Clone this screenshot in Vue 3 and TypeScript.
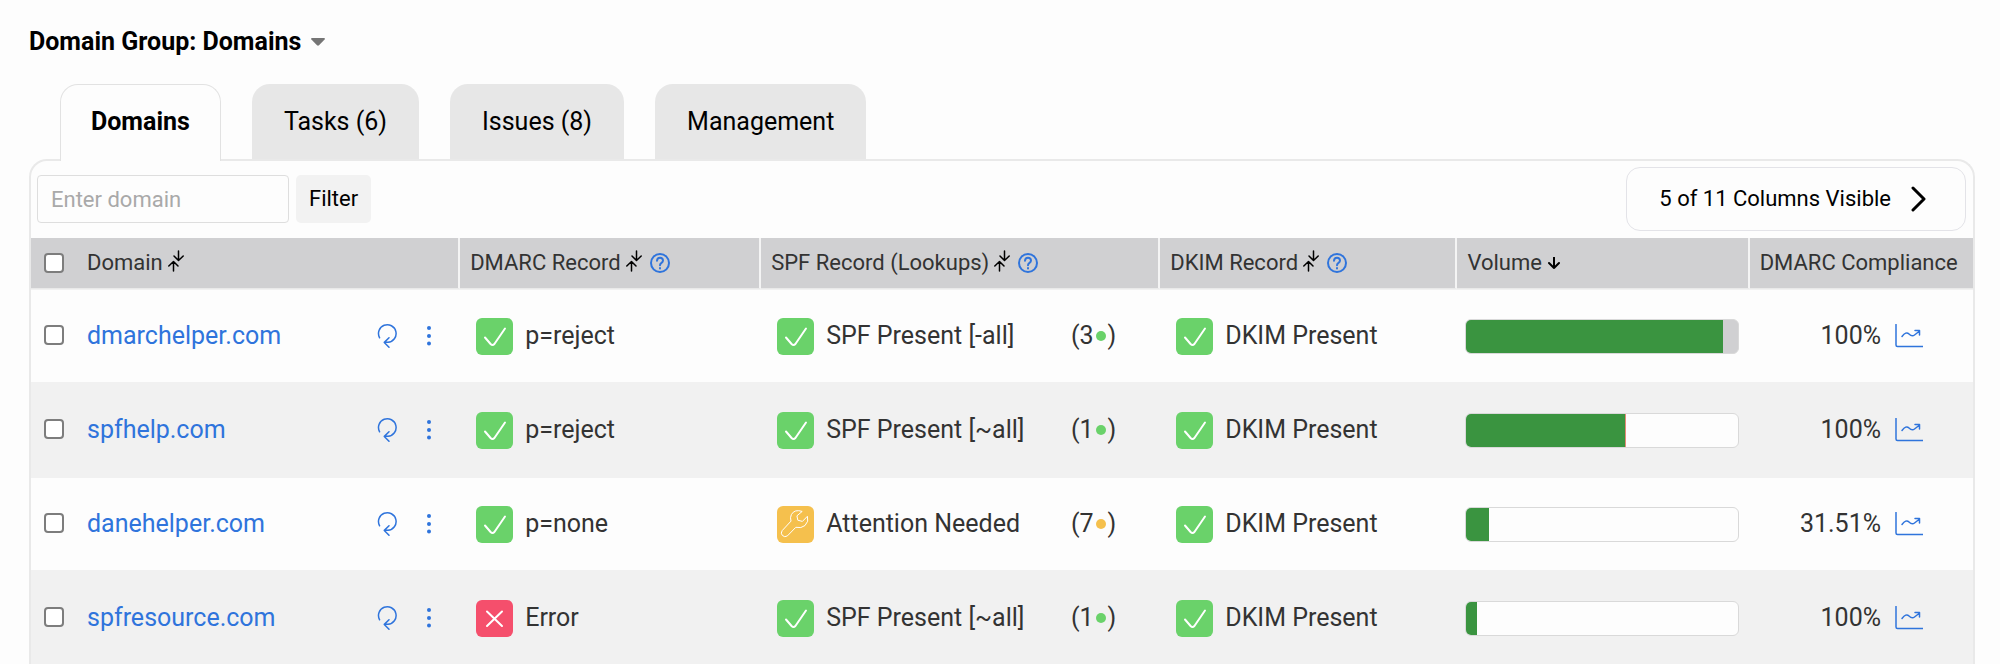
<script setup lang="ts">
import { ref } from 'vue'

type Status = 'ok' | 'warn' | 'error'

interface DomainRow {
  name: string
  dmarc: { status: Status; text: string }
  spf: { status: Status; text: string; lookups: number }
  dkim: { status: Status; text: string }
  volume: number
  rest: 'filled' | 'edge' | 'none'
  compliance: string
}

const tabs = ['Domains', 'Tasks (6)', 'Issues (8)', 'Management']
const activeTab = ref('Domains')
const filter = ref('')

const columns = [
  { label: 'DMARC Record', sort: 'both', help: true },
  { label: 'SPF Record (Lookups)', sort: 'both', help: true },
  { label: 'DKIM Record', sort: 'both', help: true },
  { label: 'Volume', sort: 'down', help: false },
  { label: 'DMARC Compliance', sort: '', help: false },
]

const rows: DomainRow[] = [
  {
    name: 'dmarchelper.com',
    dmarc: { status: 'ok', text: 'p=reject' },
    spf: { status: 'ok', text: 'SPF Present [-all]', lookups: 3 },
    dkim: { status: 'ok', text: 'DKIM Present' },
    volume: 94.5,
    rest: 'filled',
    compliance: '100%',
  },
  {
    name: 'spfhelp.com',
    dmarc: { status: 'ok', text: 'p=reject' },
    spf: { status: 'ok', text: 'SPF Present [~all]', lookups: 1 },
    dkim: { status: 'ok', text: 'DKIM Present' },
    volume: 58.5,
    rest: 'edge',
    compliance: '100%',
  },
  {
    name: 'danehelper.com',
    dmarc: { status: 'ok', text: 'p=none' },
    spf: { status: 'warn', text: 'Attention Needed', lookups: 7 },
    dkim: { status: 'ok', text: 'DKIM Present' },
    volume: 8.5,
    rest: 'none',
    compliance: '31.51%',
  },
  {
    name: 'spfresource.com',
    dmarc: { status: 'error', text: 'Error' },
    spf: { status: 'ok', text: 'SPF Present [~all]', lookups: 1 },
    dkim: { status: 'ok', text: 'DKIM Present' },
    volume: 4,
    rest: 'none',
    compliance: '100%',
  },
]

const glyphs: Record<Status, string> = {
  ok: 'M9 19.5l5.600 6.500q1.900 1.900 3.800 0L29 10.500',
  warn: 'M24.800 5.300q-7.200-2.400-10.400 3.200-1.600 3.200-.400 6.600L5.200 24.600q-2 2.700.200 4.900 2.200 2.200 5 .4L18.800 21.300q5.400 1.400 9.200-1.800 4.200-4 2.400-9.200L25.400 15.400l-4.600-1.200-.8-4z',
  error: 'M11 11.500l15 14.500M26 11.500L11 26',
}
</script>

<template>
  <main class="page">
    <h1 class="heading">
      <button type="button" class="group">
        Domain Group: Domains
        <svg class="caret" viewBox="0 0 14 8" aria-hidden="true"><path d="M1 0h12q1.500.3.600 1.500L8 7.200q-1 .9-2 0L.4 1.500Q-.5.3 1 0z" /></svg>
      </button>
    </h1>

    <nav class="tabs" role="tablist">
      <button
        v-for="tab in tabs"
        :key="tab"
        type="button"
        role="tab"
        class="tab"
        :class="{ active: tab === activeTab }"
        :aria-selected="tab === activeTab"
        @click="activeTab = tab"
      >{{ tab }}</button>
    </nav>

    <section class="panel">
      <div class="toolbar">
        <form class="filter" @submit.prevent>
          <input v-model="filter" class="field" type="text" placeholder="Enter domain" aria-label="Enter domain" />
          <button type="submit" class="apply">Filter</button>
        </form>
        <button type="button" class="visible">
          5 of 11 Columns Visible
          <svg class="next" viewBox="0 0 15 26" aria-hidden="true"><path d="M2 2l11 11L2 24" /></svg>
        </button>
      </div>

      <table class="grid">
        <colgroup>
          <col class="c-domain" />
          <col class="c-dmarc" />
          <col class="c-spf" />
          <col class="c-dkim" />
          <col class="c-volume" />
          <col />
        </colgroup>
        <thead>
          <tr>
            <th scope="col">
              <div class="head first">
                <input type="checkbox" class="tick" aria-label="Select all domains" />
                <span class="label">Domain</span>
                <svg class="sort" viewBox="0 0 16 22" aria-hidden="true"><path d="M10.500 1v9M6 6l4.500 4.500L15.200 6M5.500 21v-9M.8 16l4.700-4.500L10 16" /></svg>
              </div>
            </th>
            <th v-for="col in columns" :key="col.label" scope="col">
              <div class="head">
                <span class="label">{{ col.label }}</span>
                <svg v-if="col.sort === 'both'" class="sort" viewBox="0 0 16 22" aria-hidden="true"><path d="M10.500 1v9M6 6l4.500 4.500L15.200 6M5.500 21v-9M.8 16l4.700-4.500L10 16" /></svg>
                <svg v-if="col.sort === 'down'" class="down" viewBox="0 0 12 12" aria-hidden="true"><path d="M6 .5v10.500M1 6l5 5 5-5" /></svg>
                <button v-if="col.help" type="button" class="help" :aria-label="'About ' + col.label">
                  <svg viewBox="0 0 20 20" aria-hidden="true">
                    <circle cx="10" cy="10" r="9" />
                    <path d="M7 7.800q.2-3 3-3t3 2.700q0 1.300-1.500 2.300T10 12.300" />
                    <path d="M10 15v.5" />
                  </svg>
                </button>
              </div>
            </th>
          </tr>
        </thead>
        <tbody>
          <tr v-for="row in rows" :key="row.name">
            <td>
              <div class="cell domain">
                <input type="checkbox" class="tick" :aria-label="'Select ' + row.name" />
                <a class="link" href="#">{{ row.name }}</a>
                <button type="button" class="act" :aria-label="'Refresh ' + row.name">
                  <svg class="refresh" viewBox="0 0 20 26" aria-hidden="true"><path d="M2.600 14.800A8.800 8.800 0 1 1 11 19.300H7.500M12 14.800L7.300 19.400 12 24.200" /></svg>
                </button>
                <button type="button" class="act" :aria-label="'More for ' + row.name">
                  <svg class="dots" viewBox="0 0 4 20" aria-hidden="true"><circle cx="2" cy="2" r="2" /><circle cx="2" cy="10" r="2" /><circle cx="2" cy="17.500" r="2" /></svg>
                </button>
              </div>
            </td>
            <td>
              <div class="cell record">
                <svg class="badge" :class="row.dmarc.status" viewBox="0 0 37 37" aria-hidden="true"><path :d="glyphs[row.dmarc.status]" /></svg>
                <span>{{ row.dmarc.text }}</span>
              </div>
            </td>
            <td>
              <div class="cell record">
                <svg class="badge" :class="row.spf.status" viewBox="0 0 37 37" aria-hidden="true"><path :d="glyphs[row.spf.status]" /></svg>
                <span>{{ row.spf.text }}</span>
                <span class="lookups">({{ row.spf.lookups }}<i class="dot" :class="row.spf.status"></i>)</span>
              </div>
            </td>
            <td>
              <div class="cell record">
                <svg class="badge" :class="row.dkim.status" viewBox="0 0 37 37" aria-hidden="true"><path :d="glyphs[row.dkim.status]" /></svg>
                <span>{{ row.dkim.text }}</span>
              </div>
            </td>
            <td>
              <div class="cell volume">
                <div class="track" :class="row.rest">
                  <div class="fill" :style="{ width: row.volume + '%' }"></div>
                </div>
              </div>
            </td>
            <td>
              <div class="cell compliance">
                <span>{{ row.compliance }}</span>
                <a class="chart" href="#" :aria-label="'Compliance chart for ' + row.name">
                  <svg viewBox="0 0 28 24" aria-hidden="true">
                    <path d="M1 .5v20.500q0 1.500 1.500 1.500H28" />
                    <path d="M7 12.500q4-5.500 7-2.500t5.500 1L24 7.500M20 6.500h4.500V11" />
                  </svg>
                </a>
              </div>
            </td>
          </tr>
        </tbody>
      </table>
    </section>
  </main>
</template>

<style>
body {
  margin: 0;
  background: #fdfdfd;
}
</style>

<style scoped>
.page {
  padding: 24px 25px 0 29px;
  color: #333;
  font-family: Roboto, "Liberation Sans", sans-serif;
  font-size: 25px;
  line-height: 36px;
}

button,
input {
  margin: 0;
  padding: 0;
  border: 0;
  background: none;
  color: #000;
  font: inherit;
}

svg {
  display: block;
  flex: none;
  fill: none;
  stroke: currentColor;
  stroke-linecap: round;
  stroke-linejoin: round;
}

.heading {
  margin: 0 0 24px;
  font: inherit;
}

.group {
  display: flex;
  align-items: center;
  gap: 10px;
  font-weight: 700;
}

.caret {
  width: 14px;
  height: 8px;
  color: #757575;
  fill: currentColor;
  stroke: none;
}

.tabs {
  display: flex;
  gap: 31px;
  padding-left: 31px;
}

.tab {
  box-sizing: border-box;
  height: 75px;
  padding: 0 32px;
  border-radius: 18px 18px 0 0;
  background: #e7e7e7;
}

.tab.active {
  z-index: 1;
  height: 77px;
  margin-bottom: -2px;
  padding: 0 30px 2px;
  border: 1px solid #e2e2e2;
  border-bottom: 0;
  background: #fdfdfd;
  font-weight: 700;
}

.panel {
  border: 2px solid #e9e9e9;
  border-bottom: 0;
  border-radius: 18px 18px 0 0;
}

.toolbar {
  display: flex;
  align-items: center;
  justify-content: space-between;
  padding: 6px 7px 7px 6px;
}

.filter {
  display: flex;
  gap: 7px;
  font-size: 22px;
}

.field {
  box-sizing: border-box;
  width: 252px;
  height: 48px;
  padding: 0 13px;
  border: 1px solid #dedede;
  border-radius: 4px;
}

.field::placeholder {
  color: #a9a9a9;
}

.apply {
  height: 48px;
  padding: 0 13px;
  border-radius: 5px;
  background: #f2f2f2;
}

.visible {
  display: flex;
  box-sizing: border-box;
  align-items: center;
  gap: 20px;
  height: 64px;
  padding: 0 39px 0 32px;
  border: 1px solid #e3e3e8;
  border-radius: 14px;
  font-size: 22px;
}

.next {
  width: 15px;
  height: 26px;
  stroke-width: 3;
}

.grid {
  width: 100%;
  border-collapse: separate;
  border-spacing: 0;
  table-layout: fixed;
}

.c-domain { width: 22.1%; }
.c-dmarc { width: 15.5%; }
.c-spf { width: 20.55%; }
.c-dkim { width: 15.3%; }
.c-volume { width: 15.05%; }

th {
  padding: 0;
  border-right: 2px solid #f4f4f4;
  border-bottom: 1px solid #e9e9e9;
  background: #d0d0d2;
  font-size: 22px;
  font-weight: 400;
  text-align: left;
}

th:last-child {
  border-right: 0;
}

.head {
  display: flex;
  align-items: center;
  height: 50px;
  padding-left: 10px;
  white-space: nowrap;
}

.first {
  padding-left: 13px;
}

.tick {
  box-sizing: border-box;
  flex: none;
  width: 20px;
  height: 20px;
  margin-right: 23px;
  border: 2px solid #7d7d7d;
  border-radius: 4px;
  background: #fff;
  appearance: none;
}

.sort {
  width: 16px;
  height: 22px;
  margin: 0 0 4px 5px;
  color: #000;
  stroke-width: 1.5;
}

.down {
  width: 12px;
  height: 12px;
  margin-left: 6px;
  color: #000;
  stroke-width: 2;
}

.help {
  margin-left: 8px;
  color: #2f74dc;
}

.help svg {
  width: 20px;
  height: 20px;
  stroke-width: 2;
}

td {
  padding: 0;
  border-top: 1px solid #f1f1f1;
  border-bottom: 1px solid #f1f1f1;
}

tbody tr:nth-child(even) td {
  background: #f1f1f1;
}

.cell {
  display: flex;
  align-items: center;
  height: 92px;
  white-space: nowrap;
}

.domain {
  padding: 0 29px 0 13px;
}

.domain .tick {
  margin-bottom: 3px;
}

.link {
  flex: 1;
  color: #2f74dc;
  text-decoration: none;
}

.act {
  color: #2f74dc;
}

.refresh {
  width: 20px;
  height: 26px;
  margin-right: 30px;
}

.refresh,
.chart svg {
  stroke-width: 1.5;
}

.dots {
  width: 4px;
  height: 20px;
  fill: currentColor;
  stroke: none;
}

.record {
  gap: 12px;
  padding: 0 44px 0 16px;
}

.badge {
  width: 37px;
  height: 37px;
  border-radius: 6px;
  color: #fff;
  stroke-width: 2;
}

.badge.warn {
  stroke-width: 1;
}

.ok { background: #6ad26a; }
.warn { background: #f5c04d; }
.error { background: #f54f6c; }

.lookups {
  display: flex;
  align-items: center;
  margin-left: auto;
}

.dot {
  width: 10px;
  height: 10px;
  margin: 0 2px;
  border-radius: 50%;
}

.volume {
  padding: 0 11px 0 8px;
}

.track {
  display: flex;
  flex: 1;
  height: 33px;
  overflow: hidden;
  border: 1px solid #d9d9d9;
  border-radius: 6px;
  background: #fdfdfd;
}

.fill {
  background: #3a9440;
}

.filled {
  background: #d0d0d2;
}

.edge .fill {
  border-right: 1px solid #e58a78;
}

.compliance {
  justify-content: flex-end;
  gap: 14px;
  padding-right: 50px;
}

.chart {
  color: #2f74dc;
}

.chart svg {
  width: 28px;
  height: 24px;
}
</style>
